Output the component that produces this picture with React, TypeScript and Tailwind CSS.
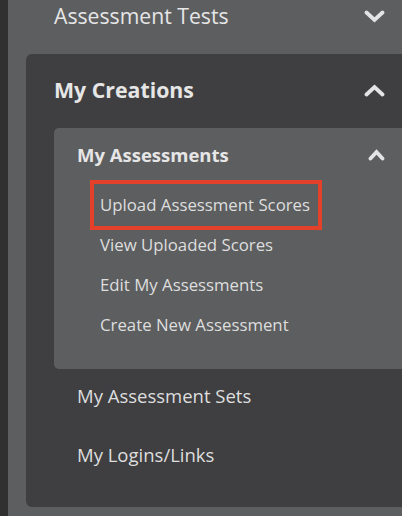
import type { ReactNode } from "react";

const font = { fontFamily: '"Open Sans", "Liberation Sans", sans-serif' };

function Chevron({ up, small }: { up?: boolean; small?: boolean }) {
  const w = small ? 17 : 21;
  const h = small ? 12 : 13;
  return (
    <svg width={w} height={h} viewBox={`0 0 ${w} ${h}`} className="shrink-0">
      <path
        d={
          up
            ? `M2.5 ${h - 2.5} L${w / 2} 3 L${w - 2.5} ${h - 2.5}`
            : `M2.5 2.5 L${w / 2} ${h - 3} L${w - 2.5} 2.5`
        }
        fill="none"
        stroke="#e4e4e4"
        strokeWidth={3.8}
        strokeLinecap="round"
        strokeLinejoin="miter"
      />
    </svg>
  );
}

function SubItem({ children, selected }: { children: ReactNode; selected?: boolean }) {
  return (
    <div className="relative h-10 text-[16.8px] leading-[40px] text-[#dedede]">
      {children}
      {selected ? (
        <div className="pointer-events-none absolute -left-[10px] -top-[5px] h-[50px] w-[232px] border-4 border-[#e4402a]" />
      ) : null}
    </div>
  );
}

export default function App() {
  return (
    <div className="flex h-[516px] w-[402px] overflow-hidden bg-[#303030]" style={font}>
      <div className="w-2 shrink-0" />
      <div className="flex flex-1 flex-col overflow-hidden bg-[#5d5e60]">
        <div className="flex items-center justify-between pl-[46px] pr-[17px] pt-[2px]">
          <span className="text-[21.2px] leading-[28px] text-[#e6e6e6]">Assessment Tests</span>
          <Chevron />
        </div>

        <div className="ml-[18px] mt-6 w-[420px] shrink-0 rounded-[6px] bg-[#3f3f41] pb-[39px] pl-7 pt-[22px]">
          <div className="flex items-center justify-between pr-[61px]">
            <span className="text-[21.3px] font-bold leading-[28px] text-[#e6e6e6]">My Creations</span>
            <Chevron up />
          </div>

          <div className="mt-6 rounded-[5px] bg-[#5d5e60] pb-6 pl-[23px] pr-[61px] pt-[13px]">
            <div className="flex items-center justify-between">
              <span className="text-[18.5px] font-bold leading-[28px] text-[#e6e6e6]">My Assessments</span>
              <Chevron up small />
            </div>
            <div className="mt-4 pl-[23px]">
              <SubItem selected>Upload Assessment Scores</SubItem>
              <SubItem>View Uploaded Scores</SubItem>
              <SubItem>Edit My Assessments</SubItem>
              <SubItem>Create New Assessment</SubItem>
            </div>
          </div>

          <div className="mt-[14px] pl-[23px] text-[18.5px] leading-[26px] text-[#dedede]">
            <div>My Assessment Sets</div>
            <div className="mt-[33px]">My Logins/Links</div>
          </div>
        </div>
      </div>
    </div>
  );
}
